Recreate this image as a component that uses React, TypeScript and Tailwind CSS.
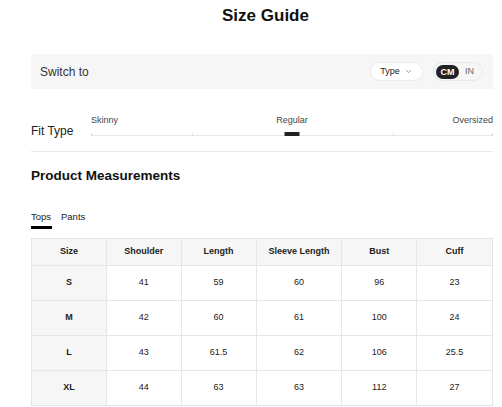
import { ChevronDown } from 'lucide-react';

const headers = ['Size', 'Shoulder', 'Length', 'Sleeve Length', 'Bust', 'Cuff'];
const widths = ['w-[75px]', 'w-[75px]', 'w-[75px]', 'w-[86px]', 'w-[75px]', 'w-[76px]'];

const rows = [
  ['S', '41', '59', '60', '96', '23'],
  ['M', '42', '60', '61', '100', '24'],
  ['L', '43', '61.5', '62', '106', '25.5'],
  ['XL', '44', '63', '63', '112', '27'],
];

export default function App() {
  return (
    <div className="w-[502px] h-[407px] overflow-hidden bg-white pl-[31px] pr-[9px] text-[#222] font-['Liberation_Sans',Arial,sans-serif]">
      {/* Title */}
      <h1 className="mr-[-7px] h-[32px] text-center text-[17px] leading-[32px] font-bold text-[#111]">
        Size Guide
      </h1>

      {/* Switch bar */}
      <div className="mt-[22px] h-[35px] flex items-center bg-[#f6f6f6] pl-[9px] pr-[10px]">
        <span className="text-[12px] text-[#333]">Switch to</span>
        <div className="ml-auto flex items-center gap-[10px]">
          <button className="w-[53px] h-[19px] rounded-full bg-white border border-[#ebebeb] flex items-center justify-center gap-[4px] text-[9px] text-[#222]">
            Type
            <ChevronDown className="w-[9px] h-[9px] text-[#555]" strokeWidth={1.5} />
          </button>
          <div className="w-[50px] h-[19px] rounded-full border border-[#e8e8e8] flex items-center pl-[2px]">
            <span className="w-[23px] h-[14px] rounded-full bg-[#222] text-white text-[9px] font-bold leading-[14px] text-center">
              CM
            </span>
            <span className="ml-[6px] text-[9px] text-[#666]">IN</span>
          </div>
        </div>
      </div>

      {/* Fit type */}
      <div className="pt-[25px] h-[63px] flex items-start border-b border-[#e8e8e8]">
        <span className="w-[60px] mt-[10px] text-[12px] leading-[14px] text-[#222]">
          Fit Type
        </span>
        <div className="flex-1">
          <div className="grid grid-cols-3 text-[9px] leading-[12px] text-[#444]">
            <span className="text-left">Skinny</span>
            <span className="text-center">Regular</span>
            <span className="text-right">Oversized</span>
          </div>
          <div className="relative mt-[9px] h-px bg-[#e8e8e8]">
            <span className="absolute left-0 bottom-0 w-px h-[3px] bg-[#d6d6d6]" />
            <span className="absolute left-1/4 bottom-0 w-px h-[3px] bg-[#e0e0e0]" />
            <span className="absolute left-3/4 bottom-0 w-px h-[3px] bg-[#e0e0e0]" />
            <span className="absolute right-0 bottom-0 w-px h-[3px] bg-[#d6d6d6]" />
            <span className="absolute left-1/2 -translate-x-1/2 top-[-3px] w-[15px] h-[4px] bg-[#222]" />
          </div>
        </div>
      </div>

      {/* Product measurements */}
      <h2 className="pt-[16px] text-[13.5px] leading-[16px] font-bold text-[#111]">Product Measurements</h2>

      <div className="mt-[27px] flex gap-[9px] text-[9.5px] leading-[12px]">
        <div className="flex flex-col">
          <span>Tops</span>
          <span className="mt-[3px] h-[3px] w-[21px] bg-black" />
        </div>
        <span>Pants</span>
      </div>

      <table className="mt-[9px] table-fixed border-collapse text-[9px] text-[#222]">
        <thead>
          <tr className="h-[27px] bg-[#f6f6f6]">
            {headers.map((h, i) => (
              <th key={h} className={`${widths[i]} border border-[#e6e6e6] font-bold text-center`}>
                {h}
              </th>
            ))}
          </tr>
        </thead>
        <tbody>
          {rows.map((r) => (
            <tr key={r[0]} className="h-[35px]">
              {r.map((c, i) => (
                <td
                  key={i}
                  className={
                    i === 0
                      ? 'border border-[#e6e6e6] bg-[#f6f6f6] font-bold text-center'
                      : 'border border-[#e6e6e6] text-center'
                  }
                >
                  {c}
                </td>
              ))}
            </tr>
          ))}
        </tbody>
      </table>
    </div>
  );
}
